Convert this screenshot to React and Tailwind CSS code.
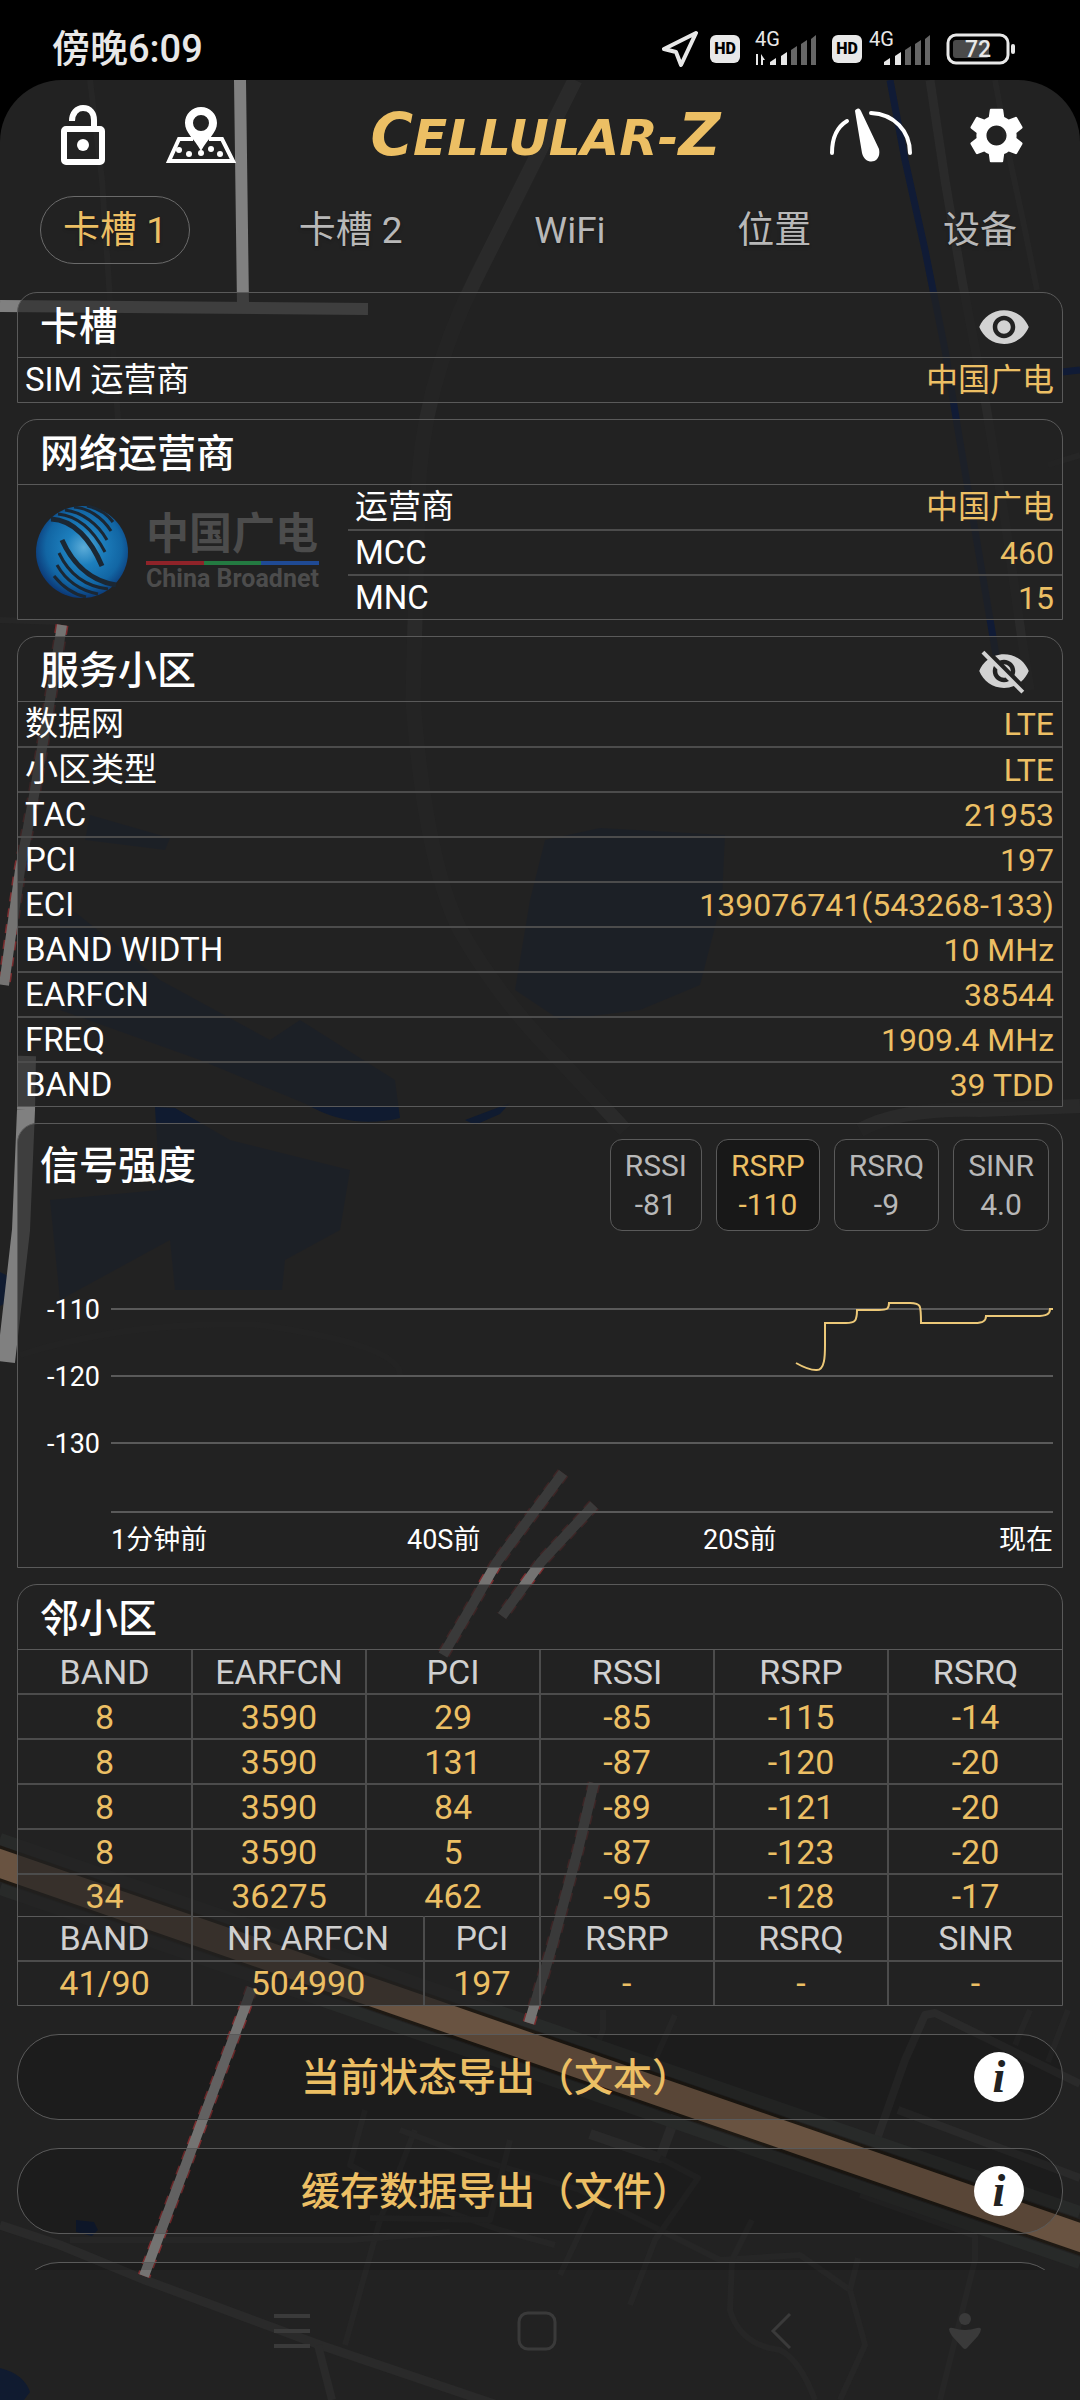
import { useState } from 'react'
import { MdSettings, MdVisibility, MdVisibilityOff } from "react-icons/md"

const tabs = ["卡槽 1", "卡槽 2", "WiFi", "位置", "设备"]

const servingCell = [
    { name: "数据网", value: "LTE" },
    { name: "小区类型", value: "LTE" },
    { name: "TAC", value: "21953" },
    { name: "PCI", value: "197" },
    { name: "ECI", value: "139076741(543268-133)" },
    { name: "BAND WIDTH", value: "10 MHz" },
    { name: "EARFCN", value: "38544" },
    { name: "FREQ", value: "1909.4 MHz" },
    { name: "BAND", value: "39 TDD" },
]

const metrics = [
    { name: "RSSI", value: "-81" },
    { name: "RSRP", value: "-110" },
    { name: "RSRQ", value: "-9" },
    { name: "SINR", value: "4.0" },
]

const lteColumns = ["BAND", "EARFCN", "PCI", "RSSI", "RSRP", "RSRQ"]
const lteRows = [
    ["8", "3590", "29", "-85", "-115", "-14"],
    ["8", "3590", "131", "-87", "-120", "-20"],
    ["8", "3590", "84", "-89", "-121", "-20"],
    ["8", "3590", "5", "-87", "-123", "-20"],
    ["34", "36275", "462", "-95", "-128", "-17"],
]

const nrColumns = ["BAND", "NR ARFCN", "PCI", "RSRP", "RSRQ", "SINR"]
const nrRows = [["41/90", "504990", "197", "-", "-", "-"]]

const MapBackground = () => (
    <svg className="absolute inset-0 w-full h-full" viewBox="0 80 1080 2320" preserveAspectRatio="xMidYMid slice" fill="none" aria-hidden="true">
        <g fill="#101b30">
            <path d="M545 840 L600 828 L725 835 L722 900 L700 985 L640 1010 L560 1020 L515 990 L530 900 Z" />
            <path d="M90 815 L170 838 L165 850 L85 840 Z" />
            <path d="M60 900 L160 980 L270 1040 L300 1020 L395 1080 L400 1118 Q350 1130 306 1104 L200 1060 L60 1010 Z" />
            <path d="M155 1107 L175 1108 L230 1140 L350 1170 L340 1230 L285 1260 L282 1290 L175 1290 L170 1240 L60 1300 L50 1200 L160 1190 Z" />
            <path d="M465 1120 L510 1103 L500 1114 L475 1125 Z" />
            <path d="M0 1272 L12 1278 L8 1302 L0 1306 Z" />
            <path d="M76 2220 L94 2222 L98 2230 L92 2236 L76 2232 Z" />
            <path d="M0 2368 Q24 2374 30 2392 L24 2400 L0 2400 Z" />
        </g>
        <g stroke="#2a2a2a" strokeLinejoin="round">
            <path strokeWidth="15" d="M575 80 L475 280 Q420 390 418 500 L413 700 Q425 860 460 930 Q500 1000 560 1060 L625 1130" />
            <path strokeWidth="9" d="M930 80 L945 180 L962 280 L985 400 L1005 520 L1022 640 L1030 690" />
            <path strokeWidth="14" d="M860 1130 Q900 1108 980 1110 L1080 1106" />
            <path strokeWidth="9" d="M0 2225 L60 2245 L145 2280 L320 2345 L500 2406" />
            <path strokeWidth="8" d="M318 2345 L332 2400" />
            <path strokeWidth="8" d="M875 2145 L905 2060 L925 2015 L935 2013 L1080 2084 M898 2110 L1080 2178" />
            <path strokeWidth="10" d="M590 2134 L660 2158 L676 2115" />
        </g>
        <g stroke="#262626" strokeWidth="6" strokeLinejoin="round">
            <path d="M995 80 L1010 160 L1025 230 L1037 290 M90 80 L102 180 L118 420" />
            <path d="M20 1355 Q130 1320 260 1325 Q400 1345 400 1375" />
            <path d="M0 620 L60 622 M1048 465 L1080 455" />
            <path d="M365 2110 L350 2165 L415 2200 L500 2230 L555 2245 M415 2130 L380 2220 L345 2345" />
            <path d="M400 2130 L480 2160 L580 2190 L720 2260 L800 2255 L850 2290 L865 2345 L840 2400" />
            <path d="M660 2158 L698 2178 L655 2240 L630 2305 M600 2190 L560 2275 M510 2140 L490 2220 L370 2218" />
            <path d="M752 2220 L732 2260 L730 2310 Q740 2345 780 2350 Q800 2360 815 2400 M603 2010 L603 2030 L597 2045" />
            <path d="M860 2195 L975 2236 L975 2260 L940 2400 M850 2290 L858 2258" />
            <path d="M70 2240 L350 2240 L450 2232 M675 2015 L655 2060 M1030 2010 L1015 2045 M1068 2010 L1048 2062" />
        </g>
        <path stroke="#101b36" strokeWidth="7" d="M890 80 L905 160 L925 250 L945 350 L958 430 L980 560 L996 655 M1062 372 L1080 370" />
        <path stroke="#282a29" strokeWidth="12" d="M0 1839 L1080 2212 M0 1889 L1080 2263" />
        <path stroke="#1e1913" strokeWidth="34" d="M-10 1860 L1090 2241" />
        <path stroke="#695341" strokeWidth="28" d="M-10 1860 L1090 2241" />
        <g stroke="#7a2c2e" strokeWidth="13" strokeDasharray="9 7">
            <path d="M62 625 L50 700 L35 790 L20 870 L4 985" />
            <path d="M563 1473 L497 1562 L474 1602 L443 1655 M594 1505 L541 1562 L502 1616" />
            <path d="M594 1783 L578 1850 L551 1950 L529 2023" />
            <path d="M252 1988 L244 2010 L144 2276" />
        </g>
        <g stroke="#808080">
            <path strokeWidth="12" d="M240 80 L243 306 M0 306 L368 309" />
            <path strokeWidth="18" d="M27 1056 L26 1110 L21 1230 L6 1362" />
            <g strokeWidth="10" stroke="#747372">
                <path d="M62 625 L50 700 L35 790 L20 870 L4 985" />
                <path d="M563 1473 L497 1562 L474 1602 L443 1655 M594 1505 L541 1562 L502 1616" />
                <path d="M594 1783 L578 1850 L551 1950 L529 2023" />
                <path d="M252 1988 L244 2010 L144 2276" />
            </g>
        </g>
    </svg>
)

const Signal = ({ data }) => (
    <svg className="w-16 h-[50px] mr-1" viewBox="0 -6 64 50" fill="#e8e8e8" role="img" aria-label="4G">
        <text x="3" y="16" fontSize="20" fontFamily="Roboto, sans-serif">4G</text>
        {data && <path d="M0 29l4 6V24h2v11H4zM9 35V24l4 6h-2v5z" />}
        <path d="M18 35v-3l6-4v7zM29 35v-9l6-4v13z" />
        <path fill="#666" d="M39 35V20l6-4v19zM49 35V14l6-4v25zM59 35V9l5-4v30z" />
    </svg>
)

const HdBadge = () => (
    <span className="w-[30px] h-7 rounded-md bg-[#e8e8e8] text-black text-base leading-7 font-black text-center">HD</span>
)

const StatusBar = () => (
    <div className="flex flex-none items-center justify-between h-20 pt-[18px] pl-[52px] pr-[65px] text-[#e8e8e8] bg-black">
        <span className="text-[38px] leading-[50px] font-medium">傍晚6:09</span>
        <div className="flex items-center gap-3">
            <svg className="w-9 h-9" viewBox="0 0 36 36" fill="none" stroke="#e8e8e8" strokeWidth="4" strokeLinejoin="round">
                <path d="M34 2 L2 18 L14 21 L19 34 Z" />
            </svg>
            <HdBadge />
            <Signal data />
            <div className="flex items-center gap-1">
                <HdBadge />
                <Signal />
            </div>
            <svg className="w-[69px] h-8" viewBox="0 0 69 32" role="img" aria-label="72%">
                <rect x="2" y="2" width="60" height="28" rx="8" fill="none" stroke="#e8e8e8" strokeWidth="3" />
                <rect x="7" y="7" width="36" height="18" rx="3" fill="#4a4a4a" />
                <rect x="65" y="11" width="4" height="10" rx="2" fill="#e8e8e8" />
                <text x="32" y="24" textAnchor="middle" fontSize="23" fontWeight="500" fontFamily="Roboto, sans-serif" fill="#e8e8e8">72</text>
            </svg>
        </div>
    </div>
)

const Header = () => (
    <header className="flex items-center h-[110px] pl-[61px] pr-[50px]">
        <div className="flex flex-1 items-center gap-[61px]">
            <button aria-label="解锁">
                <svg className="w-11 h-[60px]" viewBox="0 0 44 60" fill="none" stroke="#fff" strokeWidth="6">
                    <rect x="3" y="24" width="38" height="33" rx="2" />
                    <path d="M11 16 C11 8 16 3 22 3 C29 3 33 8 33 15 V24" />
                    <circle cx="22" cy="40" r="6" fill="#fff" stroke="none" />
                </svg>
            </button>
            <button aria-label="地图">
                <svg className="w-[70px] h-14" viewBox="0 0 70 56" fill="#fff">
                    <path fillRule="evenodd" d="M35 0 C44 0 51 7 51 16 C51 26 42 31 35 44 C28 31 19 26 19 16 C19 7 26 0 35 0 Z M35 8 A8 8 0 1 0 35 24 A8 8 0 1 0 35 8 Z" />
                    <path d="M27 32 H13 L3 54 H67 L56 32 H43" fill="none" stroke="#fff" strokeWidth="4" />
                    <circle cx="13" cy="43" r="3" />
                    <circle cx="23" cy="47" r="3" />
                    <circle cx="35" cy="46" r="3" />
                    <circle cx="45" cy="42" r="3" />
                    <circle cx="54" cy="47" r="3" />
                </svg>
            </button>
        </div>
        <h1 className="font-['DejaVu_Sans',sans-serif] font-bold italic text-[#ecbf64] text-[58px] leading-none">
            C<span className="text-[50px]">ELLULAR-</span>Z
        </h1>
        <div className="flex flex-1 items-center justify-end gap-[50px]">
            <button aria-label="测速">
                <svg className="w-[84px] h-14" viewBox="0 0 84 56" fill="none" stroke="#fff" strokeWidth="4" strokeLinecap="round">
                    <path d="M3 46 C3 32 8 20 18 14" />
                    <path d="M42 6 C65 7 81 24 81 46" />
                    <path d="M28 2 C30 1 31 2 32 4 L50 42 C53 57 36 59 33 46 L26 4 C26 3 27 2 28 2 Z" fill="#fff" stroke="none" />
                </svg>
            </button>
            <button aria-label="设置">
                <MdSettings className="w-[67px] h-[67px]" />
            </button>
        </div>
    </header>
)

const Card = ({ title, icon, children }) => (
    <section className="border border-[#5a5a5a] rounded-t-[20px] bg-[#222222]/70">
        <div className="flex items-center justify-between pt-1 pl-[22px] pr-[31px] h-[65px] border-b border-[#5a5a5a]">
            <h2 className="text-[39px] leading-[60px] font-medium">{title}</h2>
            {icon}
        </div>
        {children}
    </section>
)

const Rows = ({ items }) => (
    <dl className="flex-1">
        {items.map((item, i) => (
            <div key={item.name} className={`flex items-center justify-between pl-[7px] pr-2 ${i > 0 ? "h-[45px] border-t-2 border-[#4c4c4c]" : "h-11"}`}>
                <dt className="text-[33px] leading-10">{item.name}</dt>
                <dd className="text-[32px] leading-10 text-[#ecbf64]">{item.value}</dd>
            </div>
        ))}
    </dl>
)

const CarrierLogo = () => (
    <div className="flex items-center gap-4 pl-4 basis-[330px]">
        <svg className="w-24 h-24" viewBox="0 0 96 96" role="img" aria-label="中国广电">
            <defs>
                <radialGradient id="globe" cx="0.52" cy="0.45" r="0.55">
                    <stop offset="0" stopColor="#5cacd8" />
                    <stop offset="0.35" stopColor="#1d7fbd" />
                    <stop offset="0.75" stopColor="#1266a4" />
                    <stop offset="1" stopColor="#0c3a78" />
                </radialGradient>
            </defs>
            <circle cx="48" cy="48" r="46" fill="url(#globe)" />
            <g fill="none" stroke="#1b2733" strokeWidth="3">
                <path d="M17 15 C40 16 57 36 68 62" strokeWidth="5" />
                <path d="M24 10 C44 12 60 27 71 48" />
                <path d="M31 6 C48 8 64 20 73 36" />
                <path d="M40 3 C54 4 68 13 77 27" />
                <path d="M53 2 C63 4 73 10 79 18" />
                <path d="M28 36 C36 54 52 76 82 81" strokeWidth="5" />
                <path d="M25 49 C33 66 48 82 74 85" />
                <path d="M23 61 C31 75 44 86 64 90" />
                <path d="M20 72 C28 82 38 90 52 93" />
            </g>
        </svg>
        <div className="flex flex-col text-[#4c4c4c]">
            <span className="text-[43px] leading-[46px] font-bold">中国广电</span>
            <span className="flex h-1 mt-1">
                <i className="flex-1 bg-[#8f2329]" />
                <i className="flex-1 bg-[#237a41]" />
                <i className="flex-1 bg-[#1f4a94]" />
            </span>
            <span className="text-[25px] leading-7 font-bold">China Broadnet</span>
        </div>
    </div>
)

const SignalCard = () => {
    const [active, setActive] = useState("RSRP")

    return (
        <section className="border border-[#5a5a5a] rounded-t-[20px] bg-[#222222]/70">
            <div className="flex items-start justify-between pl-[22px] pr-[13px] pt-[15px]">
                <h2 className="text-[39px] leading-[54px] font-medium">信号强度</h2>
                <div className="flex gap-[14px]">
                    {metrics.map(metric => (
                        <button
                            key={metric.name}
                            onClick={() => setActive(metric.name)}
                            className={`flex flex-col items-center px-[14px] py-1.5 border border-[#5a5a5a] rounded-xl text-[30px] leading-[39px] ${active === metric.name ? "bg-[#181818] text-[#ecbf64]" : "bg-[#1f1f1f] text-[#b8b8b8]"}`}
                        >
                            <span>{metric.name}</span>
                            <span>{metric.value}</span>
                        </button>
                    ))}
                </div>
            </div>
            <div className="flex pt-11 pr-[9px] text-[27px]">
                <div className="w-[93px] pt-0.5 pr-[11px] text-right leading-[67px]">
                    <div>-110</div>
                    <div>-120</div>
                    <div>-130</div>
                </div>
                <div className="flex-1">
                    <svg className="block w-full h-[238px]" viewBox="0 0 942 238" preserveAspectRatio="none" fill="none" strokeWidth="2">
                        <path stroke="#5a5a5a" d="M0 34H942M0 101H942M0 168H942M0 237H942" />
                        <path stroke="#ecc878" d="M685 88 C692 92 700 95 705 95 C714 96 714 80 714 70 V48 H735 C744 48 746 46 746 35 H768 C776 35 778 34 778 28 H799 C810 28 810 30 810 48 H864 C872 48 875 46 875 41 H925 C936 41 939 39 939 34 H942" />
                    </svg>
                    <div className="grid grid-cols-[1fr_1fr_1fr_auto] leading-[54px]">
                        <span>1分钟前</span>
                        <span>40S前</span>
                        <span>20S前</span>
                        <span>现在</span>
                    </div>
                </div>
            </div>
        </section>
    )
}

const CellTable = ({ columns, rows, wide, top }) => (
    <table className={`w-full table-fixed text-center text-[34px] leading-10 ${top ? "border-t border-[#5a5a5a]" : ""}`}>
        <thead>
            <tr className="h-11 text-[#d0d0d0]">
                {columns.map((col, i) => (
                    <th key={col} scope="col" className={`font-normal p-0 border-[#4c4c4c] ${i > 0 ? "border-l-2" : ""} ${wide && i === 1 ? "w-[22.2%]" : wide && i === 2 ? "w-[11.1%]" : "w-1/6"}`}>
                        {col}
                    </th>
                ))}
            </tr>
        </thead>
        <tbody className="text-[#ecbf64]">
            {rows.map((row, n) => (
                <tr key={n} className={`border-t-2 border-[#4c4c4c] ${wide ? "h-11" : "h-[45px] last:h-[42px]"}`}>
                    {row.map((cell, i) => (
                        <td key={i} className={`p-0 border-[#4c4c4c] ${i > 0 ? "border-l-2" : ""}`}>{cell}</td>
                    ))}
                </tr>
            ))}
        </tbody>
    </table>
)

const ExportRow = ({ label }) => (
    <div className="flex items-center h-[86px] pr-[38px] border border-[#5a5a5a] rounded-[42px] bg-black/15">
        <button className="flex-1 h-full pt-1 text-[39px] font-medium text-[#ecbf64]">{label}</button>
        <button className="w-[50px] h-[50px] rounded-full bg-white text-[#222222] font-['Liberation_Serif',serif] text-[46px] leading-[46px] font-bold italic" aria-label={`${label}说明`}>
            i
        </button>
    </div>
)

const NavBar = () => (
    <nav className="flex flex-none items-center h-[130px] pb-2 pl-[170px] pr-[54px] text-[#3a3a3a]">
        <button className="flex flex-2 justify-center" aria-label="菜单">
            <svg className="w-10 h-10" viewBox="0 0 40 40" stroke="currentColor" strokeWidth="4">
                <path d="M2 5H38M2 20H38M2 35H38" />
            </svg>
        </button>
        <button className="flex flex-2 justify-center" aria-label="主页">
            <svg className="w-10 h-10" viewBox="0 0 40 40" fill="none" stroke="currentColor" strokeWidth="3">
                <rect x="2" y="2" width="36" height="36" rx="9" />
            </svg>
        </button>
        <button className="flex flex-2 justify-center" aria-label="返回">
            <svg className="w-10 h-10" viewBox="0 0 40 40" fill="none" stroke="currentColor" strokeWidth="3">
                <path d="M29 3L12 20L29 37" />
            </svg>
        </button>
        <button className="flex flex-1 justify-center" aria-label="辅助">
            <svg className="w-10 h-10" viewBox="0 0 40 40" fill="currentColor">
                <circle cx="20" cy="8" r="6" />
                <path d="M4 18 Q5 16 8 17 Q20 21 32 17 Q35 16 36 18 Q36 21 33 25 L22 37 Q20 39 18 37 L7 25 Q4 21 4 18 Z" />
            </svg>
        </button>
    </nav>
)

const App = () => {
    const [tab, setTab] = useState(tabs[0])

    return (
        <div className="flex flex-col h-screen bg-black text-white font-[Roboto,'Noto_Sans_CJK_SC',sans-serif]">
            <StatusBar />
            <div className="relative flex flex-col flex-1 min-h-0 overflow-hidden rounded-t-[62px] bg-[#222222]">
                <MapBackground />
                <div className="relative flex flex-col flex-1 min-h-0">
                    <Header />
                    <div className="flex justify-between px-10 pt-1.5 pb-7" role="tablist">
                        {tabs.map(item => (
                            <button
                                key={item}
                                role="tab"
                                aria-selected={tab === item}
                                onClick={() => setTab(item)}
                                className={`h-[68px] pt-0.5 px-[22px] border rounded-[34px] text-[37px] text-shadow-md ${tab === item ? "border-[#6a6a6a] text-[#ecbf64]" : "border-transparent text-[#b8b8b8]"}`}
                            >
                                {item}
                            </button>
                        ))}
                    </div>
                    <main className="flex flex-col flex-1 min-h-0 gap-4 px-[17px] overflow-y-auto [scrollbar-width:none]">
                        <Card title="卡槽" icon={<button aria-label="显示"><MdVisibility className="w-[54px] h-[54px] text-[#d2d2d2]" /></button>}>
                            <Rows items={[{ name: "SIM 运营商", value: "中国广电" }]} />
                        </Card>
                        <Card title="网络运营商">
                            <div className="flex">
                                <CarrierLogo />
                                <Rows items={[
                                    { name: "运营商", value: "中国广电" },
                                    { name: "MCC", value: "460" },
                                    { name: "MNC", value: "15" },
                                ]} />
                            </div>
                        </Card>
                        <Card title="服务小区" icon={<button aria-label="隐藏"><MdVisibilityOff className="w-[54px] h-[54px] text-[#d2d2d2]" /></button>}>
                            <Rows items={servingCell} />
                        </Card>
                        <SignalCard />
                        <Card title="邻小区">
                            <CellTable columns={lteColumns} rows={lteRows} />
                            <CellTable columns={nrColumns} rows={nrRows} wide top />
                        </Card>
                        <div className="flex flex-col gap-7 pt-3">
                            <ExportRow label="当前状态导出（文本）" />
                            <ExportRow label="缓存数据导出（文件）" />
                            <div className="h-[86px] border border-[#5a5a5a] rounded-[42px] bg-black/15" />
                        </div>
                    </main>
                    <NavBar />
                </div>
            </div>
        </div>
    )
}

export default App
